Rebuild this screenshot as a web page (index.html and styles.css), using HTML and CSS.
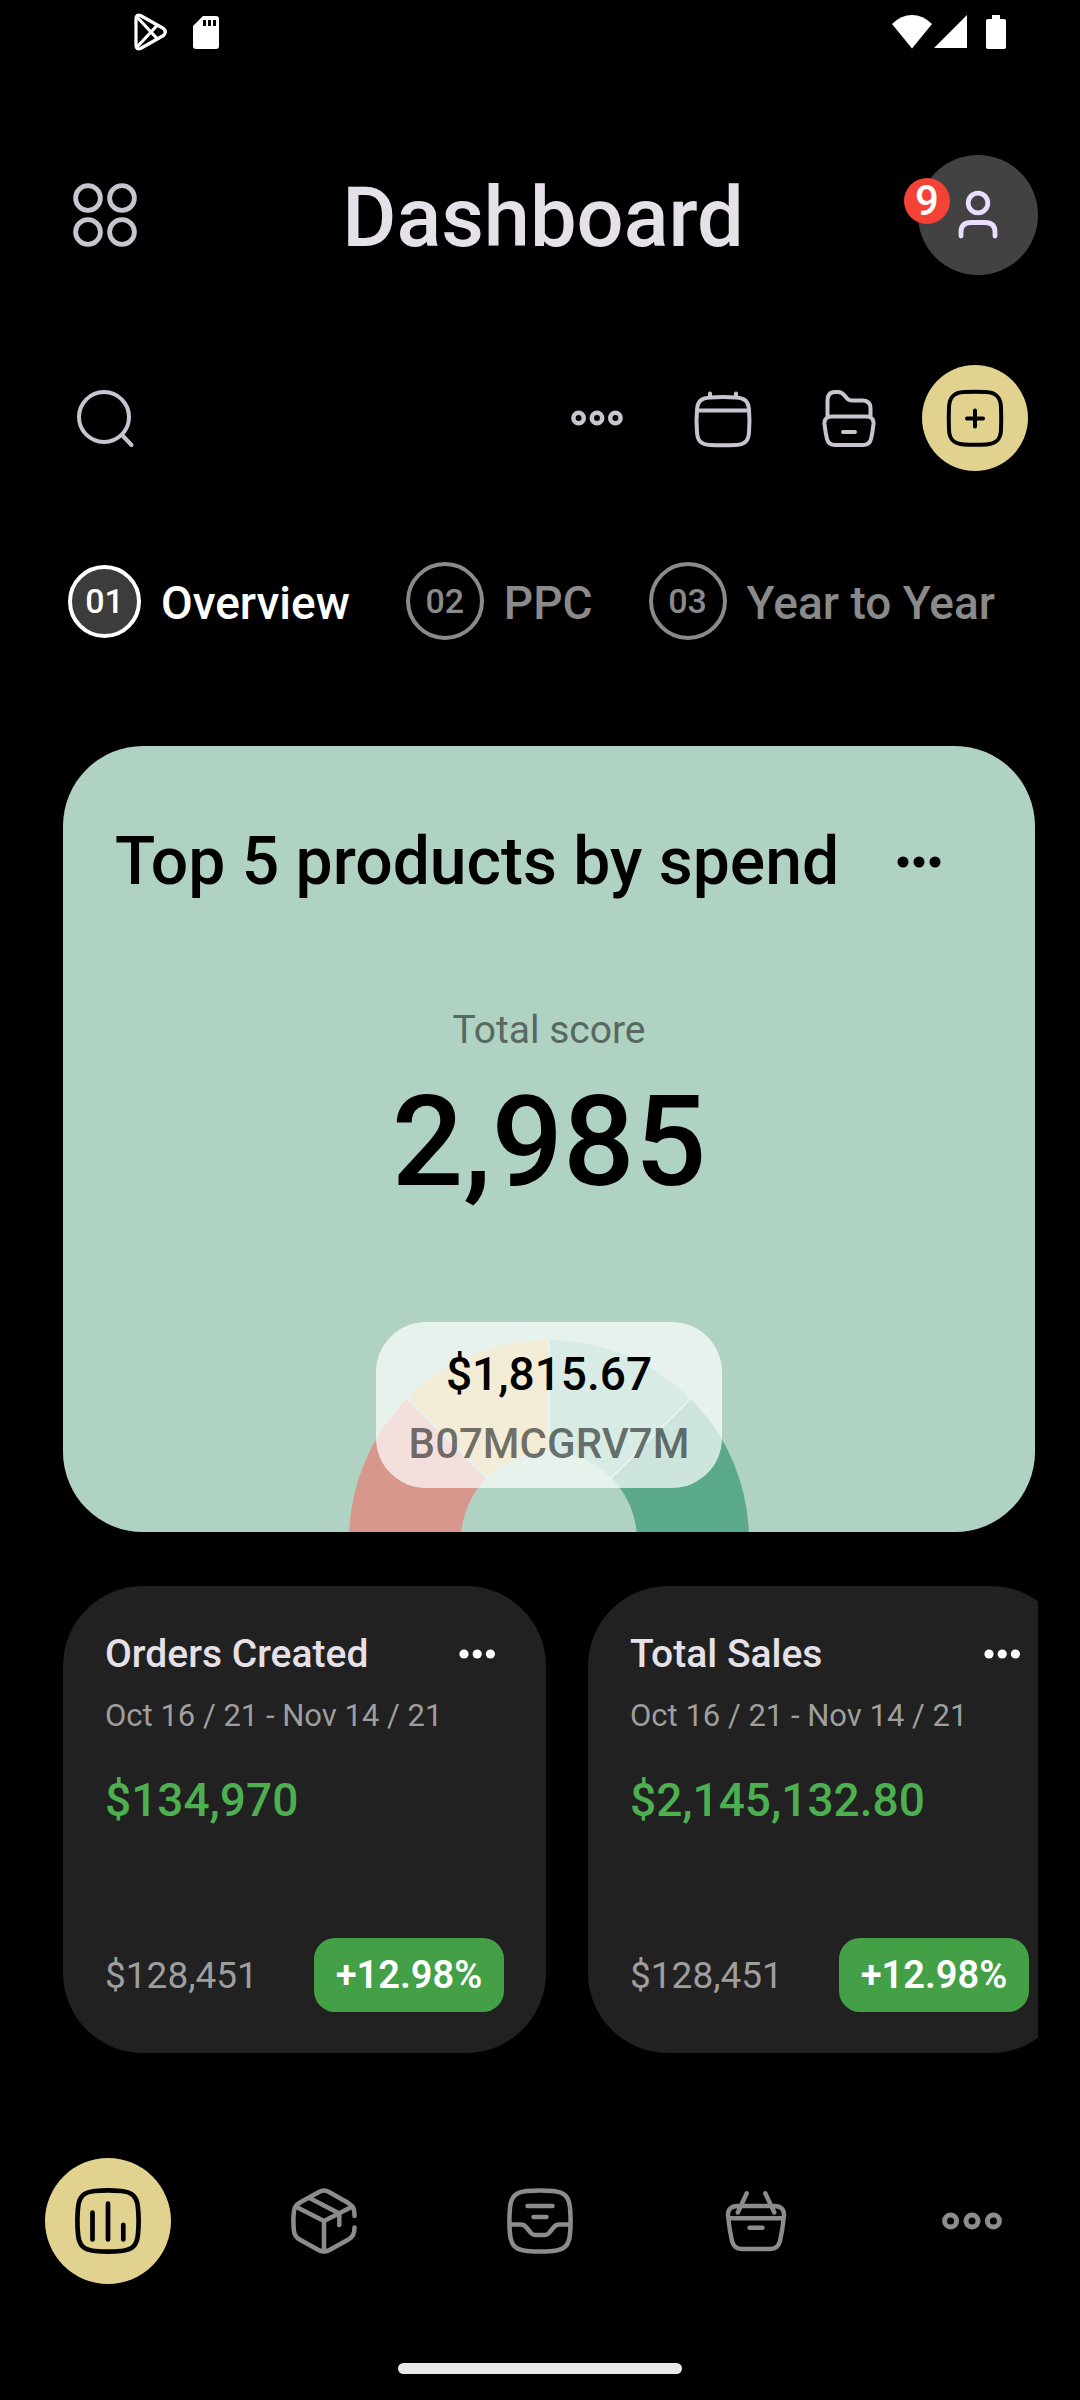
FILE: index.html
```html
<!DOCTYPE html>
<html lang="en">
<head>
<meta charset="utf-8">
<meta name="viewport" content="width=device-width, initial-scale=1">
<title>Dashboard</title>
<link rel="stylesheet" href="styles.css">
</head>
<body>
<div class="app">
  <div class="status">
    <div class="status-left">
      <svg width="36" height="38" viewBox="0 0 36 38" fill="none" stroke="#fff" stroke-width="3.2" stroke-linejoin="round"><path d="M3 5.5Q3 1 7.5 2.5L30.500 15.500Q34 19 30.500 22.500L7.500 35.500Q3 37 3 32.500ZM4 4L24.500 26M4 34L24.500 12"/></svg>
      <svg width="26" height="34" viewBox="0 0 26 34"><path fill="#fff" d="M10 1H23Q26 1 26 4V31Q26 34 23 34H3Q0 34 0 31V11Z"/><path d="M10 5h3v6h-3zM15 5h3v6h-3zM20 5h3v6h-3z"/></svg>
    </div>
    <div class="status-right">
      <svg width="40" height="34" viewBox="0 0 40 34"><path fill="#fff" d="M0 9Q9 0 20 0T40 9L20 33.500Z"/></svg>
      <svg width="34" height="34" viewBox="0 0 34 34"><path fill="#fff" d="M33 0V33H0Z"/></svg>
      <svg class="battery" width="20" height="34" viewBox="0 0 20 34"><path fill="#fff" d="M6 0h8v4h4q2 0 2 2v26q0 2-2 2H2q-2 0-2-2V6q0-2 2-2h4z"/></svg>
    </div>
  </div>

  <header class="header">
    <button class="icon-button" aria-label="Menu">
      <svg width="66" height="66" viewBox="0 0 66 66" fill="none" stroke="currentColor" stroke-width="4.800"><circle cx="16" cy="16" r="12.400"/><circle cx="50" cy="16" r="12.400"/><circle cx="16" cy="50" r="12.400"/><circle cx="50" cy="50" r="12.400"/></svg>
    </button>
    <h1 class="title">Dashboard</h1>
    <button class="avatar" aria-label="Profile, 9 notifications">
      <svg width="60" height="60" viewBox="0 0 60 60" fill="none" stroke="currentColor" stroke-width="4.800" stroke-linecap="round"><circle cx="30" cy="18" r="9.800"/><path d="M13 51V47Q13 37.500 23 37.500H37Q47 37.500 47 47V51"/></svg>
      <span class="badge">9</span>
    </button>
  </header>

  <div class="toolbar">
    <button class="icon-button" aria-label="Search">
      <svg width="60" height="60" viewBox="0 0 60 60" fill="none" stroke="currentColor" stroke-width="4" stroke-linecap="round"><circle cx="29" cy="29" r="25"/><path d="M47 47L56.500 57"/></svg>
    </button>
    <div class="tools">
      <button class="icon-button" aria-label="More">
        <svg width="60" height="60" viewBox="0 0 60 60" fill="none" stroke="currentColor" stroke-width="4.500"><circle cx="11.600" cy="30" r="5.200"/><circle cx="30" cy="30" r="5.200"/><circle cx="48.400" cy="30" r="5.200"/></svg>
      </button>
      <button class="icon-button" aria-label="Calendar">
        <svg width="60" height="60" viewBox="0 0 60 60" fill="none" stroke="currentColor" stroke-width="4" stroke-linecap="round"><path d="M17 9.500Q30 8.500 43 9.500C52 10 55.500 13.500 56 22Q57 33 56 44C55.500 53 52 56.500 43 57Q30 57.500 17 57C8 56.500 4.500 53 4 44Q3 33 4 22C4.500 13.500 8 10 17 9.500ZM4 22.500H56M17 5.500V9M43 5.500V9"/></svg>
      </button>
      <button class="icon-button" aria-label="Files">
        <svg width="60" height="60" viewBox="0 0 60 60" fill="none" stroke="currentColor" stroke-width="4" stroke-linecap="round" stroke-linejoin="round"><path d="M8.500 28V13Q8.500 4 16 4H19Q23 4 26 8C29 12 30 12.500 34 12.500H43Q51.500 12.500 51.500 20V28M13 28.500H47Q55 28.500 54.500 36Q53.500 45 52 51Q50.500 57 44 57H16Q9.500 57 8 51Q6.500 45 5.500 36Q5 28.500 13 28.500ZM24 44H36"/></svg>
      </button>
      <button class="icon-button" aria-label="Add">
        <span class="accent-small">
          <svg width="60" height="60" viewBox="0 0 60 60" fill="none" stroke="currentColor" stroke-width="4" stroke-linecap="round"><path d="M19 4Q30 3.500 41 4C51 4.500 55.500 9 56 19Q56.500 30 56 42C55.500 52 51 56 41 56.500Q30 57 19 56.500C9 56 4.500 52 4 42Q3.500 30 4 19C4.500 9 9 4.500 19 4ZM22 30.500H38M30 22.500V38.500"/></svg>
        </span>
      </button>
    </div>
  </div>

  <div class="tabs" role="tablist">
    <button class="tab tab-active" role="tab" aria-selected="true"><span class="tab-number">01</span><span class="tab-label">Overview</span></button>
    <button class="tab" role="tab" aria-selected="false"><span class="tab-number">02</span><span class="tab-label">PPC</span></button>
    <button class="tab" role="tab" aria-selected="false"><span class="tab-number">03</span><span class="tab-label">Year to Year</span></button>
  </div>

  <main>
    <section class="score-card">
      <div class="score-head">
        <h2 class="score-title">Top 5 products by spend</h2>
        <button class="score-more" aria-label="More options">
          <svg width="44" height="12" viewBox="0 0 44 12" fill="currentColor"><circle cx="6" cy="6" r="5.500"/><circle cx="22" cy="6" r="5.500"/><circle cx="38" cy="6" r="5.500"/></svg>
        </button>
      </div>
      <p class="score-label">Total score</p>
      <p class="score-value">2,985</p>
      <div class="gauge">
        <svg width="400" height="192" viewBox="0 0 400 192">
          <path fill="#d7978d" d="M0 200A200 200 0 0 1 58.600 58.600L137.800 137.800A88 88 0 0 0 112 200Z"/>
          <path fill="#d7c37e" d="M58.600 58.600A200 200 0 0 1 200 0V112A88 88 0 0 0 137.800 137.800Z"/>
          <path fill="#7dc0a8" d="M200 0A200 200 0 0 1 341.400 58.600L262.200 137.800A88 88 0 0 0 200 112Z"/>
          <path fill="#59a98a" d="M341.400 58.600A200 200 0 0 1 400 200H288A88 88 0 0 0 262.200 137.800Z"/>
          <path stroke="#b0d2c2" stroke-width="2" d="M58.600 58.600L137.800 137.800M200 0V112M341.400 58.600L262.200 137.800"/>
        </svg>
        <div class="tooltip">
          <span class="tooltip-value">$1,815.67</span>
          <span class="tooltip-label">B07MCGRV7M</span>
        </div>
      </div>
    </section>

    <div class="stats">
      <article class="stat">
        <div class="stat-head">
          <h3 class="stat-title">Orders Created</h3>
          <button class="stat-more" aria-label="More options">
            <svg width="54" height="12" viewBox="0 0 54 12" fill="currentColor"><circle cx="14" cy="6" r="4.600"/><circle cx="27.200" cy="6" r="4.600"/><circle cx="40.400" cy="6" r="4.600"/></svg>
          </button>
        </div>
        <p class="stat-date">Oct 16 / 21 - Nov 14 / 21</p>
        <p class="stat-value">$134,970</p>
        <div class="stat-foot"><span class="stat-previous">$128,451</span><span class="pill">+12.98%</span></div>
      </article>
      <article class="stat">
        <div class="stat-head">
          <h3 class="stat-title">Total Sales</h3>
          <button class="stat-more" aria-label="More options">
            <svg width="54" height="12" viewBox="0 0 54 12" fill="currentColor"><circle cx="14" cy="6" r="4.600"/><circle cx="27.200" cy="6" r="4.600"/><circle cx="40.400" cy="6" r="4.600"/></svg>
          </button>
        </div>
        <p class="stat-date">Oct 16 / 21 - Nov 14 / 21</p>
        <p class="stat-value">$2,145,132.80</p>
        <div class="stat-foot"><span class="stat-previous">$128,451</span><span class="pill">+12.98%</span></div>
      </article>
    </div>
  </main>

  <nav class="nav">
    <a class="nav-item nav-active" href="#dashboard" aria-label="Dashboard">
      <svg width="66" height="66" viewBox="0 0 66 66" fill="none" stroke="currentColor" stroke-width="4.700" stroke-linecap="round"><path d="M20 3Q33 1.800 46 3C57.500 4 62 8.500 63 20Q64.200 33 63 46C62 57.500 57.500 62 46 63Q33 64.200 20 63C8.500 62 4 57.500 3 46Q1.800 33 3 20C4 8.500 8.500 4 20 3ZM17.500 24.700V51.500M33 15.500V51.500M48.300 36.800V51.500"/></svg>
    </a>
    <a class="nav-item" href="#products" aria-label="Products">
      <svg width="66" height="66" viewBox="0 0 66 66" fill="none" stroke="currentColor" stroke-width="4.500" stroke-linecap="round" stroke-linejoin="round"><path d="M63.500 28C63.500 20 62 18 57 14.800L38 4Q33 1.200 28 4L9 14.500C3.500 18 2.500 20 2.400 33C2.500 46 3.500 48.500 9 51.800L28 62.200Q33 65 38 62.200L57 51.800C62 48.500 63.500 46 63.500 39.500M4.500 18.500L33 33L61.500 18.500M33 33V63.500M19 10.300L48.300 25.500V37"/></svg>
    </a>
    <a class="nav-item" href="#inbox" aria-label="Inbox">
      <svg width="66" height="66" viewBox="0 0 66 66" fill="none" stroke="currentColor" stroke-width="4.500" stroke-linecap="round" stroke-linejoin="round"><path d="M20 3Q33 1.800 46 3C57.500 4 62 8.500 63 20Q64.200 33 63 46C62 57.500 57.500 62 46 63Q33 64.200 20 63C8.500 62 4 57.500 3 46Q1.800 33 3 20C4 8.500 8.500 4 20 3ZM20.500 18H45.500M26.500 29H39.500M3 36.500H14Q17 36.500 19 39L24 45Q26 47 28 47H38Q40 47 42 45L47 39Q49 36.500 52 36.500H63"/></svg>
    </a>
    <a class="nav-item" href="#orders" aria-label="Orders">
      <svg width="66" height="66" viewBox="0 0 66 66" fill="none" stroke="currentColor" stroke-width="4.400" stroke-linecap="round" stroke-linejoin="round"><path d="M15 18H51Q61.500 18 61 28Q59.500 42 57 53Q55 61 47 61H19Q11 61 9 53Q6.500 42 5 28Q4.500 18 15 18ZM6 30.300H60M26.500 39.700H39.500M23.700 5.300L14.800 24.500M42.300 5.300L51.300 24.500"/></svg>
    </a>
    <a class="nav-item" href="#more" aria-label="More">
      <svg width="66" height="66" viewBox="0 0 66 66" fill="none" stroke="currentColor" stroke-width="5"><circle cx="11.600" cy="33" r="6"/><circle cx="33" cy="33" r="6"/><circle cx="54.400" cy="33" r="6"/></svg>
    </a>
  </nav>
  <div class="home-bar"></div>
</div>
</body>
</html>
```
FILE: styles.css
```css
* { box-sizing: border-box; }

body {
  margin: 0;
  background: #000;
  color: #e6e0e9;
  font-family: Roboto, "Liberation Sans", sans-serif;
  font-weight: 500;
}

h1, h2, h3, p { margin: 0; font-weight: 500; }

button {
  margin: 0;
  padding: 0;
  border: 0;
  background: none;
  color: inherit;
  font: inherit;
}

svg { display: block; flex: none; }

.app {
  display: flex;
  flex-direction: column;
  min-height: 100vh;
  padding-bottom: 26px;
}

.status {
  display: flex;
  justify-content: space-between;
  align-items: center;
  height: 63px;
  padding: 0 74px 0 133px;
}
.status-left { display: flex; align-items: center; gap: 24px; }
.status-right { display: flex; gap: 2px; }
.battery { margin-left: 16px; }

.icon-button {
  display: flex;
  align-items: center;
  justify-content: center;
  width: 126px;
  height: 106px;
  color: #cac4d0;
}

.header {
  display: flex;
  align-items: center;
  justify-content: space-between;
  margin-top: 92px;
  padding: 0 42px;
}
.title { padding-top: 6px; font-size: 83px; line-height: 114px; }

.avatar {
  position: relative;
  display: flex;
  align-items: center;
  justify-content: center;
  width: 120px;
  height: 120px;
  border-radius: 50%;
  background: #424242;
  color: #eaddff;
}
.badge {
  position: absolute;
  left: -14px;
  top: 23px;
  width: 46px;
  height: 46px;
  border-radius: 50%;
  background: #f44336;
  color: #fff;
  font-size: 42px;
  line-height: 46px;
  text-align: center;
}

.toolbar {
  display: flex;
  justify-content: space-between;
  margin-top: 90px;
  padding: 0 42px;
}
.tools { display: flex; }
.accent-small {
  display: flex;
  align-items: center;
  justify-content: center;
  width: 106px;
  height: 106px;
  border-radius: 50%;
  background: #e2d290;
  color: #000;
}

.tabs {
  display: flex;
  align-items: center;
  gap: 56px;
  height: 78px;
  margin-top: 91px;
  padding-left: 68px;
  white-space: nowrap;
}
.tab {
  display: flex;
  align-items: center;
  gap: 20px;
  color: #8a8a8a;
  font-size: 46px;
  line-height: 56px;
}
.tab-number {
  display: flex;
  align-items: center;
  justify-content: center;
  width: 78px;
  height: 78px;
  border: 4px solid currentColor;
  border-radius: 50%;
  font-size: 34px;
}
.tab-label { padding-top: 4px; }
.tab-active { color: #fff; }
.tab-active .tab-number { width: 73px; height: 73px; background: #3c3c3c; }

.score-card {
  margin: 106px 45px 0 63px;
  padding-top: 76px;
  border-radius: 80px;
  background: #b0d2c2;
  color: #000;
  text-align: center;
  overflow: hidden;
}
.score-head {
  display: flex;
  justify-content: space-between;
  padding: 0 50px 0 52px;
}
.score-title { font-size: 66px; line-height: 80px; }
.score-more {
  display: flex;
  align-items: center;
  justify-content: center;
  width: 132px;
}
.score-label {
  margin-top: 104px;
  color: #586961;
  font-size: 39px;
  font-weight: 400;
  line-height: 48px;
}
.score-value { margin-top: 24px; font-size: 126px; line-height: 128px; }

.gauge {
  position: relative;
  display: flex;
  justify-content: center;
  margin-top: 116px;
  padding-top: 18px;
}
.tooltip {
  position: absolute;
  top: 0;
  left: 50%;
  transform: translateX(-50%);
  display: flex;
  flex-direction: column;
  align-items: center;
  gap: 10px;
  min-width: 346px;
  padding: 20px 32px 16px;
  border-radius: 50px;
  background: rgba(255, 255, 255, 0.7);
}
.tooltip-value { font-size: 46px; line-height: 64px; }
.tooltip-label { color: rgba(0, 0, 0, 0.54); font-size: 42px; line-height: 56px; }

.stats {
  display: flex;
  gap: 42px;
  margin: 54px 42px 0 63px;
  overflow: hidden;
}
.stat {
  flex: 0 0 483px;
  padding: 44px 42px 41px;
  border-radius: 80px;
  background: #212121;
}
.stat-head { display: flex; justify-content: space-between; }
.stat-title { font-size: 39px; line-height: 48px; }
.stat-more { display: flex; align-items: center; color: #fff; }
.stat-date {
  margin-top: 18px;
  color: #9e9e9e;
  font-size: 31px;
  font-weight: 400;
  line-height: 40px;
}
.stat-value { margin-top: 36px; color: #4caf50; font-size: 46px; line-height: 56px; }
.stat-foot {
  display: flex;
  align-items: center;
  justify-content: space-between;
  margin-top: 110px;
}
.stat-previous { color: #9e9e9e; font-size: 37px; font-weight: 400; }
.pill {
  min-width: 190px;
  border-radius: 21px;
  background: #43a047;
  color: #fff;
  font-size: 38px;
  font-weight: 600;
  line-height: 74px;
  text-align: center;
}

.nav {
  display: grid;
  grid-template-columns: repeat(5, 1fr);
  justify-items: center;
  margin-top: 105px;
}
.nav-item {
  display: flex;
  align-items: center;
  justify-content: center;
  width: 126px;
  height: 126px;
  border-radius: 50%;
  color: #8c8c8c;
}
.nav-active { background: #e2d290; color: #000; }

.home-bar {
  align-self: center;
  width: 284px;
  height: 11px;
  margin-top: 79px;
  border-radius: 6px;
  background: #e8e8e8;
}
```
